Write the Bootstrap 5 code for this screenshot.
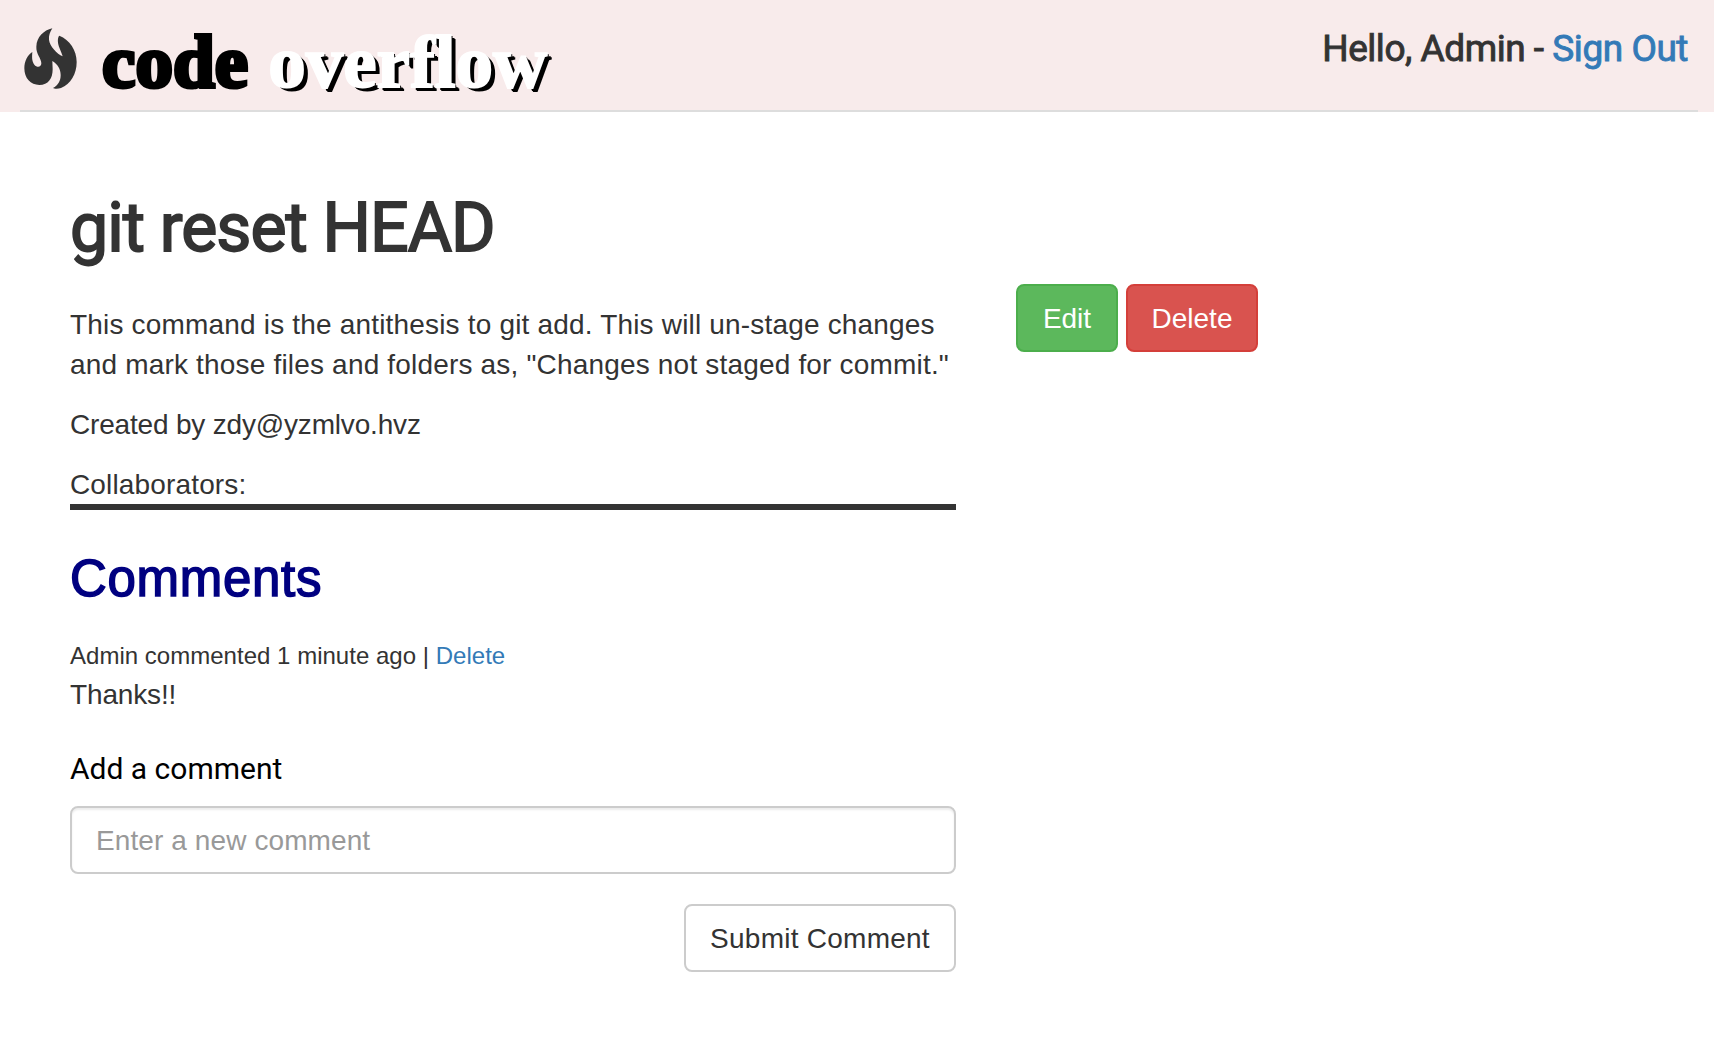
<!DOCTYPE html>
<html lang="en">
<head>
<meta charset="utf-8">
<meta name="viewport" content="width=device-width, initial-scale=1">
<title>code overflow</title>
<link href="https://cdn.jsdelivr.net/npm/bootstrap@5.3.0/dist/css/bootstrap.min.css" rel="stylesheet">
<style>
body { font: 28px/40px "Liberation Sans", Arial, sans-serif; color: #333; background: #fff; }
a { color: #337ab7; text-decoration: none; }
.site-head { height: 112px; background: #f8ebeb; padding: 0 16px 0 20px; }
.site-bar { height: 112px; border-bottom: 2px solid #ddd; }
.flame { width: 53px; height: 61px; margin: 28px 0 0 4px; fill: #333; flex: none; }
.brand { font: bold 75px/90px "Liberation Serif", serif; margin: 17px 0 0 25px; color: #000; white-space: nowrap; }
.brand-a { -webkit-text-stroke: 4px #000; letter-spacing: .1px; }
.brand-b { color: #fff; -webkit-text-stroke: 2px #fff; letter-spacing: 0; margin-left: 20px; text-shadow: 2px 1px 0 #000, 4px 3px 0 #000, 5px 4px 0 #000; font-variant-ligatures: none; }
.greet { font: 37px/44px Roboto, sans-serif; letter-spacing: -.46px; margin: 27px 10px 0 0; -webkit-text-stroke: .9px currentColor; white-space: nowrap; }
.page-title { font: 68px/76px Roboto, sans-serif; letter-spacing: -1px; -webkit-text-stroke: 1.8px currentColor; margin: 0 0 39px; }
.layout { padding: 78px 0 0 40px; }
.col-main { padding: 0 30px; width: 946px; flex: none; }
.col-side { padding: 94px 0 0 30px; gap: 8px; }
.post p { margin: 0 0 20px; white-space: nowrap; }
.post .post-text { letter-spacing: .18px; }
.post .post-author { letter-spacing: -.18px; }
.post .post-end { margin: 0; height: 45px; border-bottom: 6px solid #333; letter-spacing: .15px; }
.sec-title { font-size: 51px; line-height: 56px; letter-spacing: .7px; color: navy; -webkit-text-stroke: 1.5px currentColor; margin: 41px 0 29px; }
.meta { font-size: 24px; letter-spacing: .02px; }
.reply { margin-top: -1px; letter-spacing: -.15px; }
.field-label { font: 30px/40px Roboto, sans-serif; color: #000; display: block; margin: 34px 0 17px; }
.form-control { font-size: 28px; line-height: 40px; height: 68px; padding: 13px 24px 11px; border: 2px solid #ccc; border-radius: 8px; box-shadow: inset 0 2px 2px rgba(0,0,0,.075); letter-spacing: .1px; }
.form-control::placeholder { color: #999; }
.btn { font-size: 28px; line-height: 40px; height: 68px; padding: 13px 0 11px; border-width: 2px; border-radius: 8px; }
.btn-edit { width: 102px; color: #fff; background: #5cb85c; border-color: #4cae4c; }
.btn-del { width: 132px; color: #fff; background: #d9534f; border-color: #d43f3a; }
.btn-send { width: 272px; color: #333; background: #fff; border-color: #ccc; margin-top: 30px; letter-spacing: .25px; }
</style>
</head>
<body>
<header class="site-head">
  <div class="site-bar d-flex justify-content-between align-items-start">
    <div class="d-flex align-items-start">
      <svg class="flame" viewBox="73 84 159 183" preserveAspectRatio="none"><path d="M158 85C132 91 111 111 110 140C109 163 125 174 125 190C125 202 112 204 104 194C96 183 97 170 98 156C84 164 74 183 74 205C74 235 93 255 119 255C146 255 159 236 159 208L158 183C174 193 183 207 183 225C183 243 175 256 160 264C164 267 176 267 184 264C213 252 231 222 231 186C231 151 210 119 179 107C173 113 174 127 178 140C183 153 187 161 189 169C172 161 150 139 148 119C147 106 151 96 158 85Z"/></svg>
      <div class="brand"><span class="brand-a">code</span><span class="brand-b">overflow</span></div>
    </div>
    <div class="greet">Hello, Admin - <a href="#">Sign Out</a></div>
  </div>
</header>
<main class="layout d-flex">
  <section class="col-main post">
    <h1 class="page-title">git reset HEAD</h1>
    <p class="post-text">This command is the antithesis to git add. This will un-stage changes<br>and mark those files and folders as, "Changes not staged for commit."</p>
    <p class="post-author">Created by zdy@yzmlvo.hvz</p>
    <p class="post-end">Collaborators:</p>
    <h2 class="sec-title">Comments</h2>
    <div class="meta">Admin commented 1 minute ago | <a href="#">Delete</a></div>
    <div class="reply">Thanks!!</div>
    <form>
      <label class="field-label" for="comment">Add a comment</label>
      <input class="form-control" id="comment" type="text" placeholder="Enter a new comment">
      <div class="d-flex justify-content-end"><button class="btn btn-send" type="button">Submit Comment</button></div>
    </form>
  </section>
  <aside class="col-side d-flex align-items-start">
    <button class="btn btn-edit" type="button">Edit</button>
    <button class="btn btn-del" type="button">Delete</button>
  </aside>
</main>
<script src="https://cdn.jsdelivr.net/npm/bootstrap@5.3.0/dist/js/bootstrap.bundle.min.js"></script>
</body>
</html>
